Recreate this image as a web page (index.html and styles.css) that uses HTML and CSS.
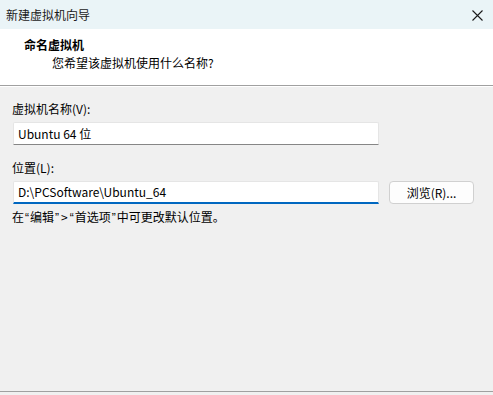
FILE: index.html
```html
<!DOCTYPE html>
<html lang="zh-CN">
<head>
<meta charset="utf-8">
<title>新建虚拟机向导</title>
<link rel="stylesheet" href="styles.css">
</head>
<body>
<div class="window">
  <div class="titlebar">
    <span class="title">新建虚拟机向导</span>
    <span class="close">
      <svg width="11" height="11" viewBox="0 0 11 11"><path d="M0.5 0.5 L10.5 10.5 M10.5 0.5 L0.5 10.5" stroke="#1a1a1a" stroke-width="1.1" fill="none"/></svg>
    </span>
  </div>
  <div class="header">
    <div class="h-title">命名虚拟机</div>
    <div class="h-sub">您希望该虚拟机使用什么名称?</div>
  </div>
  <div class="content">
    <div class="label">虚拟机名称(V):</div>
    <div class="row">
      <div class="input">Ubuntu 64 位</div>
    </div>
    <div class="label label2">位置(L):</div>
    <div class="row">
      <div class="input focused">D:\PCSoftware\Ubuntu_64</div>
      <div class="button">浏览(R)...</div>
    </div>
    <div class="hint">在<span class="q">“</span>编辑<span class="q">”</span><span class="gt">&gt;</span><span class="q">“</span>首选项<span class="q">”</span>中可更改默认位置。</div>
  </div>
  <div class="footer"></div>
</div>
</body>
</html>
```
FILE: styles.css
```css
html, body {
  margin: 0;
  padding: 0;
}
body {
  font-family: "Noto Sans CJK SC", "Noto Sans", sans-serif;
  font-size: 12px;
  color: #000;
  background: #f0f0f0;
}
.window {
  width: 493px;
  height: 395px;
  display: flex;
  flex-direction: column;
  background: #f0f0f0;
  overflow: hidden;
}
.titlebar {
  height: 29px;
  flex: none;
  background: #eaf4f7;
  display: flex;
  align-items: center;
  justify-content: space-between;
  padding: 0 10px 0 6px;
}
.title {
  font-size: 12px;
  line-height: 16px;
  color: #1a1a1a;
}
.close {
  display: flex;
  width: 11px;
  height: 11px;
  margin-top: 1px;
}
.header {
  height: 57px;
  flex: none;
  background: #fff;
  border-bottom: 1px solid #a0a0a0;
  box-shadow: 0 1px 0 #ffffff;
  box-sizing: border-box;
  padding-top: 8px;
}
.h-title {
  font-weight: bold;
  padding-left: 24px;
  line-height: 16px;
}
.h-sub {
  padding-left: 52px;
  line-height: 17px;
  margin-top: 1px;
}
.content {
  flex: 1;
  padding: 15px 0 0 12px;
}
.label {
  line-height: 16px;
  height: 16px;
  margin-bottom: 5px;
}
.label2 {
  margin-top: 15px;
}
.row {
  display: flex;
  align-items: flex-start;
  gap: 10px;
}
.input {
  width: 366px;
  height: 23px;
  box-sizing: border-box;
  margin-left: 1px;
  background: #fff;
  border: 1px solid #e5e5e5;
  border-bottom: 1px solid #868686;
  padding: 0 4px;
  line-height: 21px;
  border-radius: 2px 2px 0 0;
}
.input.focused {
  border-bottom: 2px solid #0067c0;
  line-height: 20px;
}
.button {
  width: 85px;
  height: 23px;
  box-sizing: border-box;
  background: #fdfdfd;
  border: 1px solid #d0d0d0;
  border-radius: 4px;
  text-align: center;
  line-height: 21px;
}
.hint {
  margin-top: 5px;
  line-height: 16px;
}
.q {
  font-family: "Liberation Sans", sans-serif;
  padding: 0 1px;
}
.gt {
  padding: 0 1px;
}
.footer {
  height: 3px;
  flex: none;
  border-top: 1px solid #a0a0a0;
  background: #f0f0f0;
}
```
